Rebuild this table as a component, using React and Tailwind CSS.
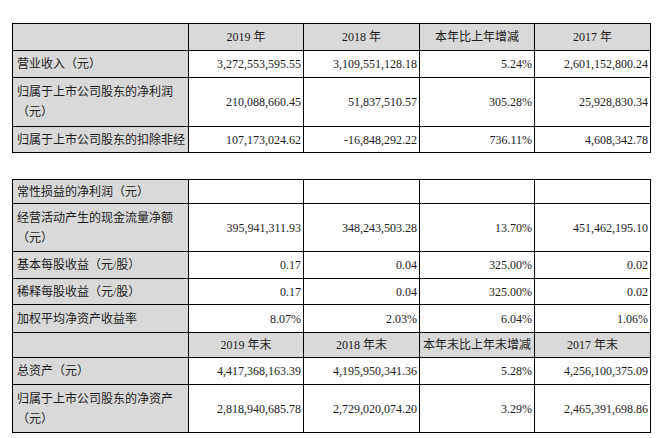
import React from 'react';

const cols = ['w-[176px]', 'w-[115px]', 'w-[116px]', 'w-[115px]', 'w-[116px]'];

const table1 = [
    { head: true, h: 'h-[27px]', label: [''], v: ['2019 年', '2018 年', '本年比上年增减', '2017 年'] },
    { h: 'h-[27px]', label: ['营业收入（元）'], v: ['3,272,553,595.55', '3,109,551,128.18', '5.24%', '2,601,152,800.24'] },
    { h: 'h-[49px]', label: ['归属于上市公司股东的净利润', '（元）'], v: ['210,088,660.45', '51,837,510.57', '305.28%', '25,928,830.34'] },
    { h: 'h-[26px]', label: ['归属于上市公司股东的扣除非经'], v: ['107,173,024.62', '-16,848,292.22', '736.11%', '4,608,342.78'] },
];

const table2 = [
    { h: 'h-[24px]', label: ['常性损益的净利润（元）'], v: ['', '', '', ''] },
    { h: 'h-[48px]', label: ['经营活动产生的现金流量净额', '（元）'], v: ['395,941,311.93', '348,243,503.28', '13.70%', '451,462,195.10'] },
    { h: 'h-[27px]', label: ['基本每股收益（元/股）'], v: ['0.17', '0.04', '325.00%', '0.02'] },
    { h: 'h-[26px]', label: ['稀释每股收益（元/股）'], v: ['0.17', '0.04', '325.00%', '0.02'] },
    { h: 'h-[28px]', label: ['加权平均净资产收益率'], v: ['8.07%', '2.03%', '6.04%', '1.06%'] },
    { head: true, h: 'h-[25px]', label: [''], v: ['2019 年末', '2018 年末', '本年末比上年末增减', '2017 年末'] },
    { h: 'h-[27px]', label: ['总资产（元）'], v: ['4,417,368,163.39', '4,195,950,341.36', '5.28%', '4,256,100,375.09'] },
    { h: 'h-[48px]', label: ['归属于上市公司股东的净资产', '（元）'], v: ['2,818,940,685.78', '2,729,020,074.20', '3.29%', '2,465,391,698.86'] },
];

const Table = ({ rows }) => (
    <table className="table-fixed border-collapse w-[638px] text-[12px] leading-[20px] text-[#1c1c1c]">
        <colgroup>
            {cols.map((c, i) => <col key={i} className={c} />)}
        </colgroup>
        <tbody>
            {rows.map((r, i) => (
                <tr key={i} className={r.h}>
                    <td className="border border-black bg-[#d9d9d9] pl-[4px] pr-[2px] align-middle whitespace-nowrap">
                        {r.label.map((l, j) => <div key={j}>{l}</div>)}
                    </td>
                    {r.v.map((v, j) => (
                        <td
                            key={j}
                            className={r.head
                                ? 'border border-black bg-[#d9d9d9] text-center align-middle whitespace-nowrap px-[2px]'
                                : 'border border-black bg-white text-right align-middle whitespace-nowrap pr-[2px] pl-[2px]'}
                        >
                            {v}
                        </td>
                    ))}
                </tr>
            ))}
        </tbody>
    </table>
);

export default function App() {
    return (
        <div className="w-[665px] h-[438px] bg-white overflow-hidden font-['Liberation_Serif','Noto_Sans_CJK_SC',serif]">
            <div className="pl-[12px] pt-[23px] flex flex-col gap-[26px]">
                <Table rows={table1} />
                <Table rows={table2} />
            </div>
        </div>
    );
}
